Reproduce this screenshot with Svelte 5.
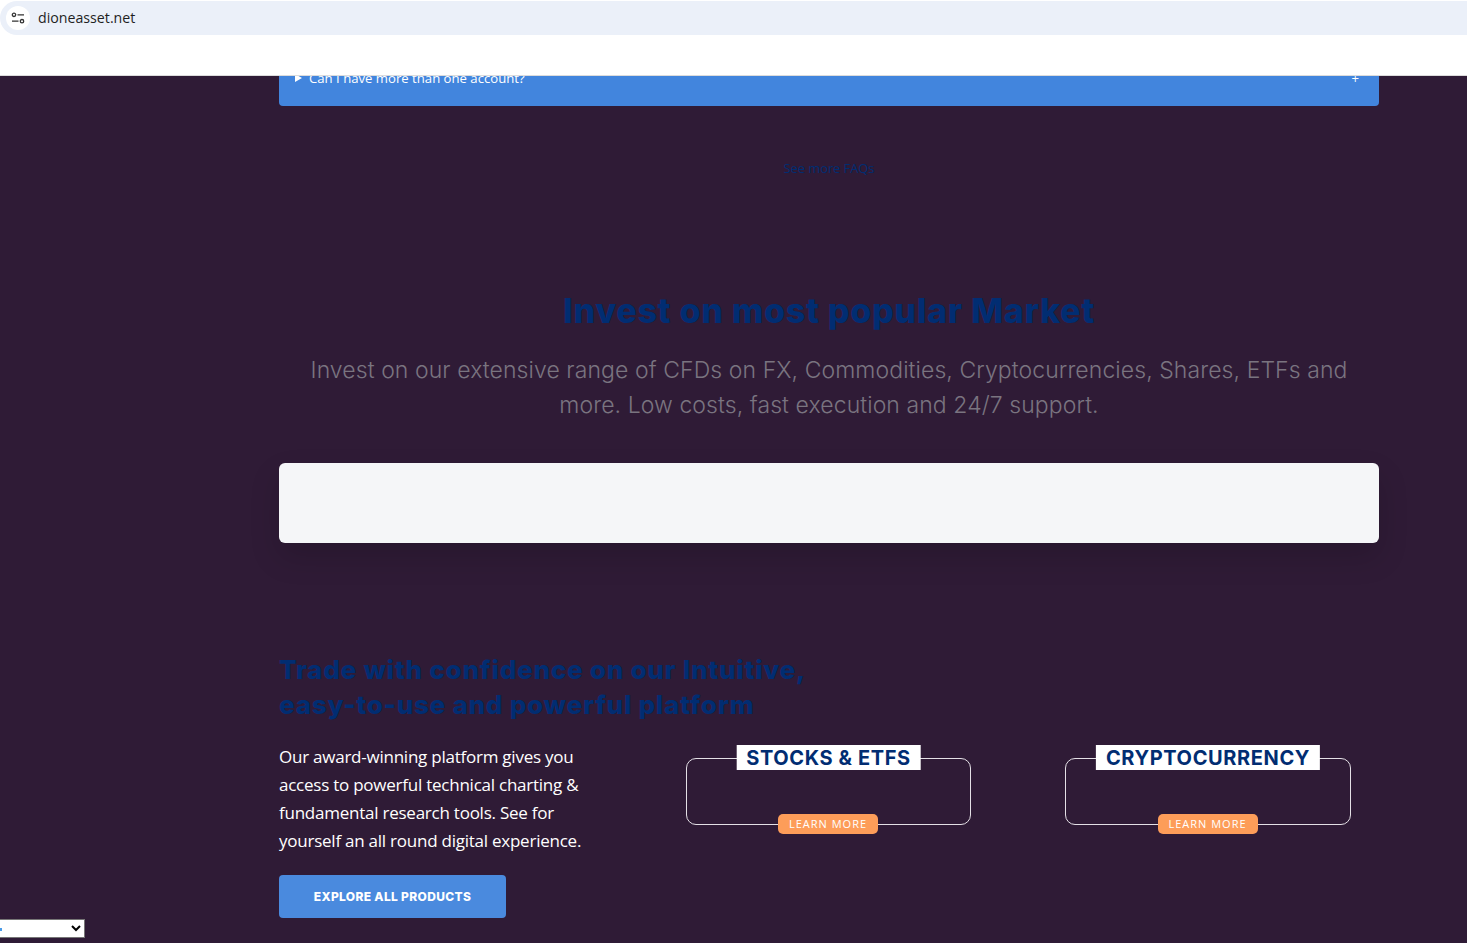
<script>
  const products = [
    { name: "STOCKS & ETFS", width: 285 },
    { name: "CRYPTOCURRENCY", width: 286 }
  ];
</script>

<style>
  :global(body) {
    background: #2f1b36;
    font-family: "Open Sans", sans-serif;
  }

  .page {
    height: 943px;
    overflow: hidden;
    display: flex;
    flex-direction: column;
  }

  .browser {
    position: relative;
    z-index: 2;
    flex: none;
    height: 75px;
    background: #fff;
    border-bottom: 1px solid #dcdcdc;
  }

  .address {
    height: 34px;
    margin-top: 1px;
    background: #ebf0f9;
    border-radius: 17px 0 0 17px;
    display: flex;
    align-items: center;
    padding-left: 6px;
    gap: 8px;
    font-size: 14.2px;
    color: #1f1f1f;
  }

  .url {
    margin-top: -1px;
  }

  .tune {
    width: 24px;
    height: 24px;
    border-radius: 50%;
    background: #fff;
    display: flex;
    align-items: center;
    justify-content: center;
  }

  .content {
    width: 1100px;
    margin-left: 279px;
  }

  .faq {
    height: 30px;
    background: #4285dd;
    border-radius: 0 0 4px 4px;
    color: #fff;
    font-size: 13.15px;
    line-height: 18px;
    padding: 0 20px 0 16px;
    display: flex;
    justify-content: space-between;
    overflow: hidden;
  }

  .faq > span {
    margin-top: -7px;
    height: 18px;
  }

  .question {
    display: flex;
    align-items: center;
    gap: 7px;
  }

  .arrow {
    width: 0;
    height: 0;
    border-left: 7px solid #fff;
    border-top: 4px solid transparent;
    border-bottom: 4px solid transparent;
  }

  .more {
    margin-top: 53px;
    text-align: center;
    font-size: 13px;
    line-height: 19px;
    letter-spacing: -0.1px;
    color: #012d72;
  }

  h1 {
    margin: 110px 0 0;
    text-align: center;
    font-family: Inter, sans-serif;
    font-size: 34px;
    line-height: 46px;
    font-weight: 800;
    letter-spacing: 0.72px;
    color: #012d72;
  }

  .lead {
    margin: 19px 0 0;
    text-align: center;
    font-family: Inter, sans-serif;
    font-weight: 300;
    font-size: 23px;
    line-height: 35px;
    letter-spacing: 0.08px;
    color: #7a7480;
    padding: 0 20px;
  }

  .ticker {
    height: 80px;
    margin-top: 40px;
    background: #f5f6f8;
    border-radius: 6px;
    box-shadow: 0 14px 30px rgba(0, 0, 0, 0.15);
  }

  h2 {
    margin: 109px 0 0;
    font-family: Inter, sans-serif;
    font-size: 26px;
    line-height: 35px;
    font-weight: 800;
    letter-spacing: 0.78px;
    color: #012d72;
  }

  .platform {
    display: flex;
    margin-top: 21px;
  }

  .intro {
    width: 407px;
    flex: none;
  }

  .intro p {
    margin: 0;
    width: 320px;
    color: #fff;
    font-size: 17px;
    line-height: 28px;
    letter-spacing: -0.24px;
  }

  .explore {
    display: block;
    width: 227px;
    height: 43px;
    margin-top: 20px;
    border: 0;
    border-radius: 4px;
    background: #4a8ade;
    color: #fff;
    font-family: Inter, sans-serif;
    font-size: 12px;
    font-weight: 800;
    letter-spacing: 0.33px;
  }

  .products {
    display: flex;
    gap: 94px;
    padding-top: 15px;
  }

  .card {
    position: relative;
    box-sizing: border-box;
    height: 67px;
    border: 1px solid #e4e0e6;
    border-radius: 10px;
  }

  .card h3 {
    position: absolute;
    top: -14px;
    left: 50%;
    transform: translateX(-50%);
    margin: 0;
    padding: 1px 10px 0;
    background: #fff;
    color: #012d72;
    font-family: Inter, sans-serif;
    font-size: 20px;
    line-height: 24px;
    font-weight: 700;
    letter-spacing: 0.62px;
    white-space: nowrap;
  }

  .card a {
    position: absolute;
    left: calc(50% - 50.5px);
    bottom: -10px;
    width: 100px;
    height: 20px;
    border-radius: 5px;
    background: #fd9d59;
    color: #fff;
    font-size: 11px;
    line-height: 20px;
    letter-spacing: 1px;
    text-align: center;
    text-decoration: none;
  }

  select {
    position: fixed;
    left: -3px;
    top: 919px;
    width: 88px;
    height: 19px;
    background: #fff;
    border: 1px solid #767676;
    color: #000;
    font-size: 11px;
  }

  .speck {
    position: fixed;
    left: 0;
    top: 928px;
    width: 2px;
    height: 3px;
    background: #4a9be8;
  }
</style>

<div class="page">
  <header class="browser">
    <div class="address">
      <span class="tune">
        <svg width="14" height="12" viewBox="0 0 14 12" fill="none" stroke="#333" stroke-width="1.3">
          <circle cx="3" cy="2.8" r="1.7" />
          <path d="M6.5 2.8h6.5M1 9.2h6.5" />
          <circle cx="11" cy="9.2" r="1.7" />
        </svg>
      </span>
      <span class="url">dioneasset.net</span>
    </div>
  </header>

  <main class="content">
    <div class="faq">
      <span class="question"><i class="arrow"></i>Can I have more than one account?</span>
      <span>+</span>
    </div>

    <div class="more">See more FAQs</div>

    <h1>Invest on most popular Market</h1>
    <p class="lead">
      Invest on our extensive range of CFDs on FX, Commodities, Cryptocurrencies, Shares, ETFs and
      more. Low costs, fast execution and 24/7 support.
    </p>

    <div class="ticker"></div>

    <h2>Trade with confidence on our Intuitive,<br />easy-to-use and powerful platform</h2>

    <div class="platform">
      <div class="intro">
        <p>
          Our award-winning platform gives you access to powerful technical charting &amp;
          fundamental research tools. See for yourself an all round digital experience.
        </p>
        <button class="explore">EXPLORE ALL PRODUCTS</button>
      </div>

      <div class="products">
        {#each products as product}
          <div class="card" style="width: {product.width}px">
            <h3>{product.name}</h3>
            <a href="#top">LEARN MORE</a>
          </div>
        {/each}
      </div>
    </div>
  </main>

  <select>
    <option></option>
  </select>
  <span class="speck"></span>
</div>
